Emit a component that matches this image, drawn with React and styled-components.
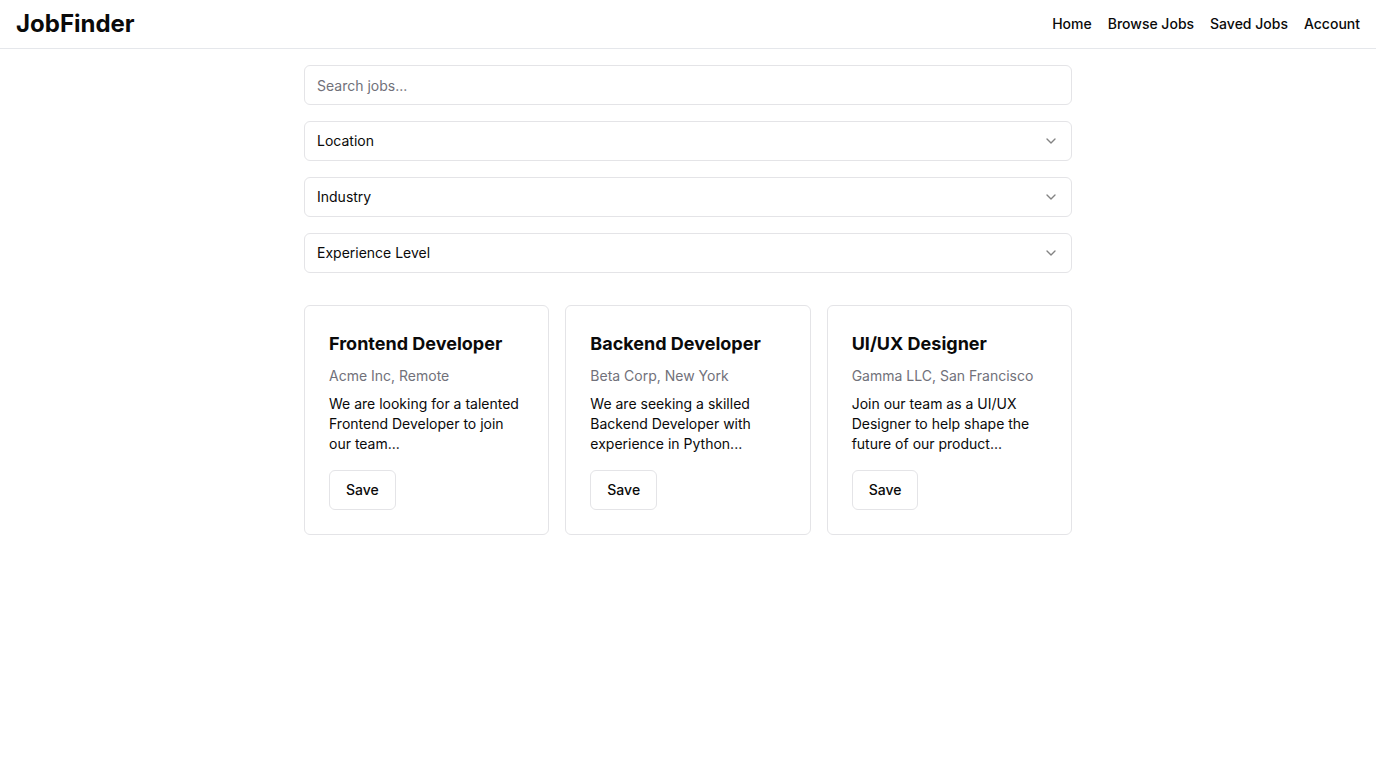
import React from "react";
import styled, { createGlobalStyle } from "styled-components";
import { ChevronDown } from "lucide-react";

const Global = createGlobalStyle`
  * { box-sizing: border-box; }
  body {
    margin: 0;
    background: #ffffff;
    font-family: Inter, "Noto Sans", sans-serif;
    color: #0a0a0a;
  }
`;

const Header = styled.header`
  height: 49px;
  border-bottom: 1px solid #e5e7eb;
  display: flex;
  align-items: center;
  justify-content: space-between;
  padding: 0 16px;
`;

const Logo = styled.h1`
  margin: 0;
  font-size: 24px;
  font-weight: 700;
  line-height: 32px;
  color: #0a0a0a;
`;

const Nav = styled.nav`
  display: flex;
  gap: 16px;
`;

const NavLink = styled.a`
  font-size: 14px;
  font-weight: 500;
  color: #0a0a0a;
  text-decoration: none;
  line-height: 20px;
`;

const Main = styled.main`
  max-width: 768px;
  margin: 0 auto;
  padding-top: 16px;
  display: flex;
  flex-direction: column;
`;

const Filters = styled.div`
  display: flex;
  flex-direction: column;
  gap: 16px;
`;

const Input = styled.input`
  height: 40px;
  width: 100%;
  border: 1px solid #e4e4e7;
  border-radius: 6px;
  padding: 0 12px;
  font-family: inherit;
  font-size: 14px;
  color: #0a0a0a;
  outline: none;
  &::placeholder { color: #71717a; }
`;

const SelectBox = styled.div`
  height: 40px;
  border: 1px solid #e4e4e7;
  border-radius: 6px;
  padding: 0 12px 1px;
  display: flex;
  align-items: center;
  justify-content: space-between;
  font-size: 14px;
  color: #0a0a0a;
  svg { opacity: 0.5; margin-top: 1px; }
`;

const Grid = styled.div`
  margin-top: 32px;
  display: grid;
  grid-template-columns: repeat(3, 1fr);
  gap: 16px;
`;

const Card = styled.div`
  border: 1px solid #e4e4e7;
  border-radius: 6px;
  padding: 24px;
  display: flex;
  flex-direction: column;
  align-items: flex-start;
`;

const Title = styled.h2`
  margin: 0 0 8px;
  font-size: 18px;
  font-weight: 700;
  line-height: 28px;
`;

const Meta = styled.p`
  margin: 0 0 8px;
  font-size: 14px;
  line-height: 20px;
  color: #71717a;
`;

const Desc = styled.p`
  margin: 0 0 16px;
  font-size: 14px;
  line-height: 20px;
  color: #0a0a0a;
`;

const Button = styled.button`
  height: 40px;
  padding: 0 16px 1px;
  border: 1px solid #e4e4e7;
  border-radius: 6px;
  background: #fff;
  font-family: inherit;
  font-size: 14px;
  font-weight: 500;
  color: #0a0a0a;
`;

const jobs = [
  {
    title: "Frontend Developer",
    meta: "Acme Inc, Remote",
    desc: "We are looking for a talented Frontend Developer to join our team...",
  },
  {
    title: "Backend Developer",
    meta: "Beta Corp, New York",
    desc: "We are seeking a skilled Backend Developer with experience in Python...",
  },
  {
    title: "UI/UX Designer",
    meta: "Gamma LLC, San Francisco",
    desc: "Join our team as a UI/UX Designer to help shape the future of our product...",
  },
];

export default function App() {
  return (
    <>
      <Global />
      <Header>
        <Logo>JobFinder</Logo>
        <Nav>
          <NavLink href="#">Home</NavLink>
          <NavLink href="#">Browse Jobs</NavLink>
          <NavLink href="#">Saved Jobs</NavLink>
          <NavLink href="#">Account</NavLink>
        </Nav>
      </Header>
      <Main>
        <Filters>
          <Input placeholder="Search jobs..." />
          {["Location", "Industry", "Experience Level"].map((l) => (
            <SelectBox key={l}>
              <span>{l}</span>
              <ChevronDown size={16} />
            </SelectBox>
          ))}
        </Filters>
        <Grid>
          {jobs.map((j) => (
            <Card key={j.title}>
              <Title>{j.title}</Title>
              <Meta>{j.meta}</Meta>
              <Desc>{j.desc}</Desc>
              <Button>Save</Button>
            </Card>
          ))}
        </Grid>
      </Main>
    </>
  );
}
